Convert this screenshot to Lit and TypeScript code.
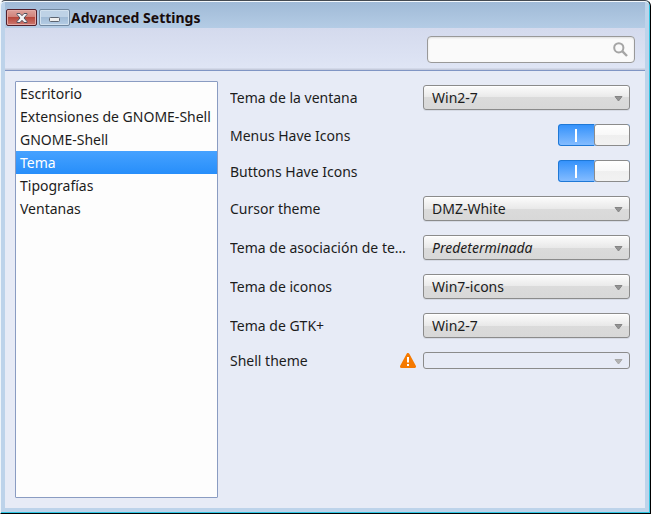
import { LitElement, html, css, nothing } from "lit";
import { customElement, state } from "lit/decorators.js";
import { classMap } from "lit/directives/class-map.js";

interface Row {
  id: string;
  label: string;
  kind: "select" | "switch";
  value?: string;
  italic?: boolean;
  disabled?: boolean;
}

const SECTIONS = ["Escritorio", "Extensiones de GNOME-Shell", "GNOME-Shell", "Tema", "Tipografías", "Ventanas"];

const ROWS: Row[] = [
  { id: "window", label: "Tema de la ventana", kind: "select", value: "Win2-7" },
  { id: "menus", label: "Menus Have Icons", kind: "switch" },
  { id: "buttons", label: "Buttons Have Icons", kind: "switch" },
  { id: "cursor", label: "Cursor theme", kind: "select", value: "DMZ-White" },
  { id: "keys", label: "Tema de asociación de te…", kind: "select", value: "Predeterminada", italic: true },
  { id: "icons", label: "Tema de iconos", kind: "select", value: "Win7-icons" },
  { id: "gtk", label: "Tema de GTK+", kind: "select", value: "Win2-7" },
  { id: "shell", label: "Shell theme", kind: "select", value: "", disabled: true },
];

@customElement("app-root")
export class AppRoot extends LitElement {
  @state() private section = "Tema";

  static styles = css`
    :host {
      display: block;
      font: 14px/17px "Noto Sans", "Open Sans", sans-serif;
      color: #1c1c1c;
    }
    * {
      box-sizing: border-box;
    }
    .desktop {
      min-height: 100vh;
      display: flex;
      flex-direction: column;
      background: #fff;
      padding-bottom: 1px;
    }
    .window {
      flex: 1;
      display: flex;
      flex-direction: column;
      border: 1px solid #000;
      border-top-color: #444a52;
      border-left-color: #eef4fa;
      border-radius: 5px 6px 0 0;
      background: #bdd3ea;
      box-shadow: inset -1px -1px #2fc5e2, inset 0 1px #f4f8fc;
      padding: 1px 5px 5px 4px;
    }
    .titlebar {
      display: flex;
      align-items: center;
      height: 26px;
      padding: 5px 0 0 1px;
      background: linear-gradient(#a0bad7, #b4cce5);
      color: #180b0b;
    }
    .title {
      margin: 0 0 0 1px;
      font: inherit;
      font-weight: 700;
    }
    .wbtn {
      width: 31px;
      height: 17px;
      padding: 0;
      display: grid;
      place-items: center;
      border: 1px solid #71879f;
      border-radius: 2px;
      background: linear-gradient(#bed2e6 50%, #a1bbd6 50%, #b5cde5);
      box-shadow: inset 0 0 0 1px #d2e1ef;
    }
    .wbtn + .wbtn {
      margin-left: 2px;
    }
    .wbtn.close {
      border-color: #52202c;
      background: linear-gradient(#dda29b, #cf8078 50%, #b7483c 50%, #cc7870);
      box-shadow: inset 0 0 0 1px #e3aaa5;
    }
    .toolbar {
      display: flex;
      justify-content: flex-end;
      height: 43px;
      padding: 8px 10px 0;
      background: linear-gradient(#d4daed, #dfe5f5 40px, #c5cbdc 41px);
      border-bottom: 1px solid #8095c4;
    }
    .search {
      display: flex;
      align-items: center;
      width: 208px;
      height: 27px;
      padding: 0 6px;
      border: 1px solid #999;
      border-radius: 4px;
      background: #fafafa;
      box-shadow: inset 0 1px 2px #ddd;
    }
    .search input {
      flex: 1;
      min-width: 0;
      border: 0;
      outline: 0;
      background: none;
      font: inherit;
    }
    .main {
      flex: 1;
      display: flex;
      gap: 12px;
      padding: 10px 15px 10px 10px;
      background: #e7ebf6;
    }
    .sidebar {
      flex: none;
      width: 203px;
      border: 1px solid #8a9cc2;
      border-radius: 1px;
      background: #fdfdfd;
    }
    .item {
      display: block;
      width: 100%;
      height: 23px;
      padding: 0 4px;
      border: 0;
      background: none;
      font: inherit;
      color: inherit;
      text-align: left;
      white-space: nowrap;
    }
    .item.active {
      background: linear-gradient(#46a2ff, #278efa);
      color: #fff;
    }
    .rows {
      flex: 1;
      min-width: 0;
      display: flex;
      flex-direction: column;
      gap: 14px;
      padding-top: 4px;
    }
    .row {
      display: flex;
      align-items: center;
      gap: 7px;
    }
    .label {
      flex: 1;
      min-width: 0;
      overflow: hidden;
      white-space: nowrap;
      text-overflow: ellipsis;
    }
    .combo {
      position: relative;
      flex: none;
      display: flex;
      width: 207px;
    }
    .combo select {
      appearance: none;
      width: 100%;
      height: 25px;
      padding: 0 24px 0 8px;
      border: 1px solid #8b8b8b;
      border-radius: 3px;
      background: linear-gradient(#fcfcfc, #e9e9e9 50%, #dbdbdb 50%, #d8d8d8);
      box-shadow: 0 1px #d6dae4, inset 0 1px #fff;
      font: inherit;
      color: inherit;
    }
    .combo.italic select {
      font-style: italic;
    }
    .combo.off select {
      height: 17px;
      background: #e7ebf6;
      box-shadow: none;
      opacity: 1;
    }
    .arrow {
      position: absolute;
      right: 7px;
      top: 50%;
      margin-top: -2px;
      pointer-events: none;
      fill: #949494;
      stroke: #858585;
    }
    .off .arrow {
      fill: #b2b2b2;
      stroke: #a8a8a8;
    }
    .switch {
      appearance: none;
      flex: none;
      display: flex;
      width: 72px;
      height: 22px;
      margin: 0;
      border-radius: 3px;
      overflow: hidden;
      background: #c9c9c9;
    }
    .switch::before {
      content: "";
      width: 36px;
      border: 1px solid #8b8b8b;
      border-right: 0;
      border-radius: 3px 0 0 3px;
    }
    .switch::after {
      content: "";
      width: 36px;
      border: 1px solid #8b8b8b;
      border-radius: 3px;
      background: linear-gradient(#fff, #f8f8f8 50%, #efefef 50%, #f2f2f2);
    }
    .switch:checked {
      background: #84bcff;
    }
    .switch:checked::before {
      border-color: #1f78d6;
      background:
        linear-gradient(#fff, #fff) 16px 4px / 2px 13px no-repeat,
        linear-gradient(#3592fb, #84bcff);
    }
    .warn {
      flex: none;
    }
  `;

  private renderControl(r: Row) {
    if (r.kind === "switch") {
      return html`<input class="switch" type="checkbox" role="switch" id=${r.id} checked />`;
    }
    return html`<div class=${classMap({ combo: true, italic: !!r.italic, off: !!r.disabled })}>
      <select id=${r.id} ?disabled=${r.disabled}>
        ${r.value ? html`<option>${r.value}</option>` : nothing}
      </select>
      <svg class="arrow" width="9" height="6" viewBox="0 0 9 6" aria-hidden="true">
        <path d="M1 .5H8L4.5 5Z" stroke-width="1" stroke-linejoin="round" />
      </svg>
    </div>`;
  }

  render() {
    return html`
      <div class="desktop">
        <div class="window">
          <header class="titlebar">
            <button class="wbtn close" aria-label="Cerrar">
              <svg width="12" height="10" viewBox="0 0 12 10">
                <path d="M1 .5H4L6 2.7 8 .5H11V1.5L8 5 11 8.5V9.5H8L6 7.3 4 9.5H1V8.500L4 5 1 1.5Z"
                  fill="#f4f4f6" stroke="#53535f" />
              </svg>
            </button>
            <button class="wbtn" aria-label="Minimizar">
              <svg width="11" height="9" viewBox="0 0 11 9">
                <rect x=".5" y="4.5" width="10" height="4" rx="1" fill="#eee" stroke="#5c6470" />
              </svg>
            </button>
            <h1 class="title">Advanced Settings</h1>
          </header>
          <div class="toolbar">
            <label class="search">
              <input type="text" aria-label="Buscar" />
              <svg width="15" height="15" viewBox="0 0 15 15" fill="none" stroke="#a5a5a5" aria-hidden="true">
                <circle cx="5.8" cy="5.8" r="4.6" stroke-width="2" />
                <path d="M9.2 9.2L14 14" stroke-width="2.4" />
              </svg>
            </label>
          </div>
          <div class="main">
            <nav class="sidebar">
              ${SECTIONS.map(
                (s) => html`<button
                  class=${classMap({ item: true, active: s === this.section })}
                  @click=${() => (this.section = s)}
                >${s}</button>`,
              )}
            </nav>
            <section class="rows">
              ${ROWS.map(
                (r) => html`<div class="row">
                  <label class="label" for=${r.id}>${r.label}</label>
                  ${r.disabled
                    ? html`<svg class="warn" width="16" height="15" viewBox="0 0 16 15" aria-hidden="true">
                        <path d="M8 1.500L14.500 13.500H1.500Z" fill="#f57900" stroke="#f57900" stroke-width="3" stroke-linejoin="round" />
                        <path d="M7 4H9V9.500H7ZM7 11H9V13H7Z" fill="#fff" />
                      </svg>`
                    : nothing}
                  ${this.renderControl(r)}
                </div>`,
              )}
            </section>
          </div>
        </div>
      </div>
    `;
  }
}
